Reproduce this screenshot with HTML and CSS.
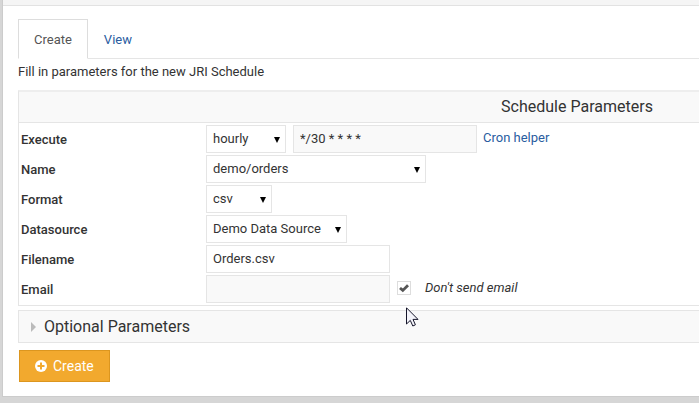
FILE: index.html
```
<!DOCTYPE html>
<html lang="en">
<head>
<meta charset="utf-8">
<title>JRI Schedule</title>
<link rel="stylesheet" href="styles.css">
</head>
<body>
<div class="panel">
  <div class="panel-head"></div>
  <div class="panel-body">
    <nav class="tabs">
      <a class="tab active" href="#create">Create</a>
      <a class="tab" href="#view">View</a>
    </nav>
    <p class="intro">Fill in parameters for the new JRI Schedule</p>
    <form>
      <section class="box">
        <h2 class="box-title">Schedule Parameters</h2>
        <div class="rows">
          <div class="row">
            <label class="name" for="execute">Execute</label>
            <span class="select execute"><select id="execute"><option>hourly</option></select></span>
            <input class="field" type="text" value="*/30 * * * *" aria-label="Cron expression" readonly>
            <a class="helper" href="#cron">Cron helper</a>
          </div>
          <div class="row">
            <label class="name" for="report">Name</label>
            <span class="select report"><select id="report"><option>demo/orders</option></select></span>
          </div>
          <div class="row">
            <label class="name" for="format">Format</label>
            <span class="select format"><select id="format"><option>csv</option></select></span>
          </div>
          <div class="row">
            <label class="name" for="datasource">Datasource</label>
            <span class="select datasource"><select id="datasource"><option>Demo Data Source</option></select></span>
          </div>
          <div class="row">
            <label class="name" for="filename">Filename</label>
            <input class="field" id="filename" type="text" value="Orders.csv">
          </div>
          <div class="row">
            <label class="name" for="email">Email</label>
            <input class="field" id="email" type="text" readonly>
            <span class="check">
              <input id="noemail" type="checkbox" checked>
              <svg class="tick" viewBox="0 0 14 14" aria-hidden="true"><path d="M3 7 5.8 9.4 11 4.2" fill="none" stroke="#555" stroke-width="2.8"/></svg>
              <svg class="pointer" viewBox="0 0 14 20" aria-hidden="true"><path d="M.5 .8V17l3.8-3.6L6.8 19l2.6-1.2L7 12.4h5z" fill="#f4f4fa" stroke="#15152a"/></svg>
            </span>
            <label class="note" for="noemail">Don't send email</label>
          </div>
        </div>
      </section>
      <button class="optional" type="button"><span class="caret"></span>Optional Parameters</button>
      <button class="submit" type="submit">
        <svg class="plus" viewBox="0 0 12 12" aria-hidden="true"><circle cx="6" cy="6" r="6" fill="#fff"/><path d="M6 2.5v7M2.5 6h7" stroke="#f2a92e" stroke-width="2"/></svg>
        Create
      </button>
    </form>
  </div>
</div>
</body>
</html>
```
FILE: styles.css
```
* { box-sizing: border-box; }
body {
  margin: 0;
  background: #d6d6d6;
  color: #333;
  font: 13px/20px Roboto, sans-serif;
}
.panel {
  margin-left: 2px;
  background: #fff;
  border-left: 1px solid #ccc;
  border-bottom: 1px solid #ccc;
}
.panel-head {
  height: 6px;
  background: #f5f5f5;
  border-bottom: 1px solid #e2e2e2;
}
.panel-body { padding: 13px 0 14px 15px; }
.tabs {
  display: flex;
  height: 40px;
  border-bottom: 1px solid #e5e5e5;
}
.tab {
  padding: 10px 15px;
  height: 40px;
  border: 1px solid transparent;
  color: #2a5d9f;
  text-decoration: none;
}
.tab.active {
  color: #555;
  background: #fff;
  border-color: #ddd #ddd #fff;
}
.intro { margin: 3px 0 8px; }
.box {
  border: 1px solid #e5e5e5;
  border-top: 2px solid #eee;
  border-right: 0;
}
.box-title {
  margin: 0;
  padding-left: 436px;
  height: 31px;
  background: #f9f9f9;
  border-bottom: 1px solid #e5e5e5;
  font-size: 16px;
  font-weight: 400;
  line-height: 30px;
  text-align: center;
}
.rows {
  display: grid;
  gap: 2px;
  padding: 2px;
}
.row {
  display: flex;
  align-items: center;
  height: 28px;
}
.name {
  width: 185px;
  font-weight: 500;
  padding-top: 2px;
}
.select { position: relative; height: 28px; }
.select::after {
  content: "";
  position: absolute;
  right: 6px;
  top: 12px;
  border: 3px solid transparent;
  border-top: 6px solid #000;
  border-bottom: 0;
  pointer-events: none;
}
.select select, .field {
  appearance: none;
  width: 100%;
  height: 28px;
  margin: 0;
  padding: 0 6px 2px;
  border: 1px solid #e5e5e5;
  border-radius: 0;
  background: #fff;
  color: #333;
  font: inherit;
}
.select select { padding-bottom: 0; }
.execute { width: 80px; margin-right: 7px; }
.report { width: 220px; }
.format { width: 66px; }
.datasource { width: 141px; }
.row .field { width: 184px; }
.field:read-only { background: #f9f9f9; }
.helper {
  margin-left: 6px;
  padding-bottom: 2px;
  color: #2a5d9f;
  text-decoration: none;
}
.check {
  position: relative;
  width: 14px;
  height: 14px;
  margin: 0 14px 2px 7px;
}
.check input {
  display: block;
  appearance: none;
  width: 14px;
  height: 14px;
  margin: 0;
  border: 1px solid #ddd;
  background: #fff;
}
.tick {
  position: absolute;
  inset: 0;
  width: 14px;
  height: 14px;
  pointer-events: none;
}
.pointer {
  position: absolute;
  left: 9px;
  top: 26px;
  width: 14px;
  height: 20px;
  z-index: 1;
}
.note { font-style: italic; padding-bottom: 2px; }
.optional {
  display: flex;
  align-items: center;
  width: 100%;
  height: 33px;
  margin: 4px 0 7px;
  padding: 0 12px;
  border: 1px solid #e5e5e5;
  border-right: 0;
  background: #f9f9f9;
  color: #333;
  font: 16px/20px Roboto, sans-serif;
}
.caret {
  margin-right: 8px;
  border: 5px solid transparent;
  border-left-color: #bbb;
  border-right: 0;
}
.submit {
  display: flex;
  align-items: center;
  gap: 6px;
  height: 32px;
  margin-left: 1px;
  padding: 0 15px;
  border: 1px solid #dc961f;
  background: #f2a92e;
  color: #fff;
  font: 14px/20px Roboto, sans-serif;
}
.plus { width: 12px; height: 12px; }
```
